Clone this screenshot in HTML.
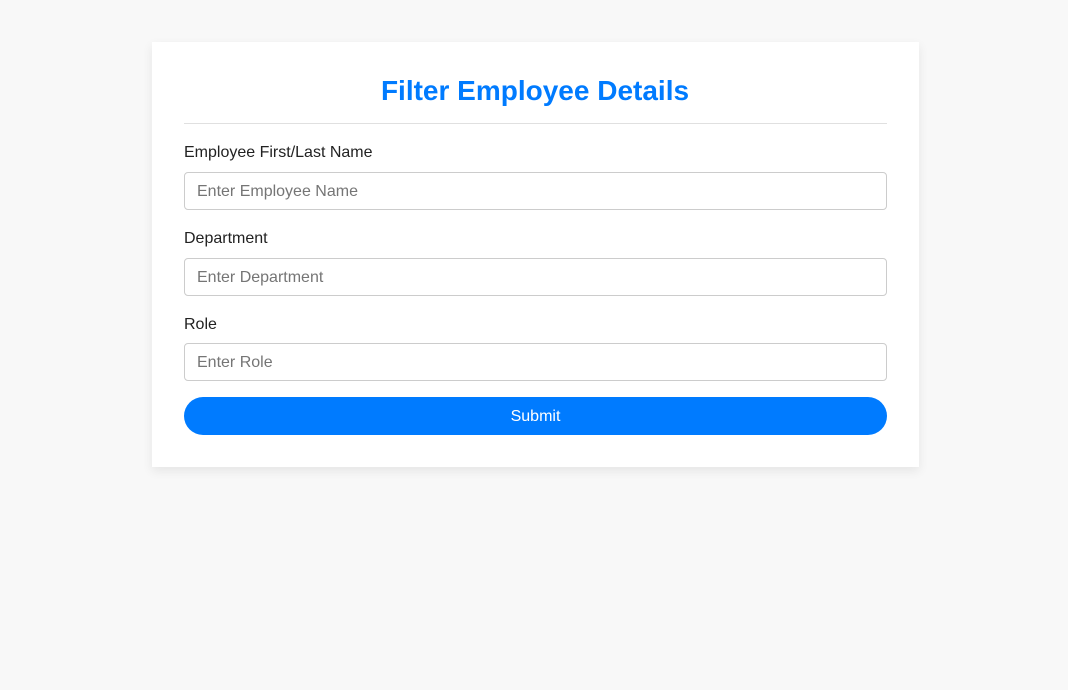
<!DOCTYPE html>
<html><head><style>
body{margin:0;background:#f8f8f8;font-family:"Liberation Sans",sans-serif;width:1068px;height:690px;overflow:hidden}
.card{position:absolute;left:152px;top:42px;width:767px;height:425px;background:#fff;box-shadow:0 4px 10px rgba(0,0,0,0.08);box-sizing:border-box;padding:0 32px}
h1{margin:0;position:absolute;top:75px;left:2px;right:0;text-align:center;color:#007bff;font-size:28px;font-weight:bold;line-height:32px}
.hr{position:absolute;top:123px;left:184px;width:703px;height:1px;background:#e0e0e0}
.lbl{position:absolute;left:184px;font-size:16px;color:#222}
.inp{position:absolute;left:184px;width:703px;height:38px;box-sizing:border-box;border:1px solid #ccc;border-radius:4px;padding-left:12px;line-height:38px;color:#757575;font-size:16px}
.btn{position:absolute;left:184px;top:397px;width:703px;height:38px;border-radius:19px;background:#007bff;color:#fff;text-align:center;line-height:40px;font-size:16px}
</style></head><body>
<div class="card"></div>
<h1>Filter Employee Details</h1>
<div class="hr"></div>
<div class="lbl" style="top:144px">Employee First/Last Name</div>
<div class="inp" style="top:172px">Enter Employee Name</div>
<div class="lbl" style="top:230px">Department</div>
<div class="inp" style="top:258px">Enter Department</div>
<div class="lbl" style="top:316px">Role</div>
<div class="inp" style="top:343px">Enter Role</div>
<div class="btn">Submit</div>
</body></html>
